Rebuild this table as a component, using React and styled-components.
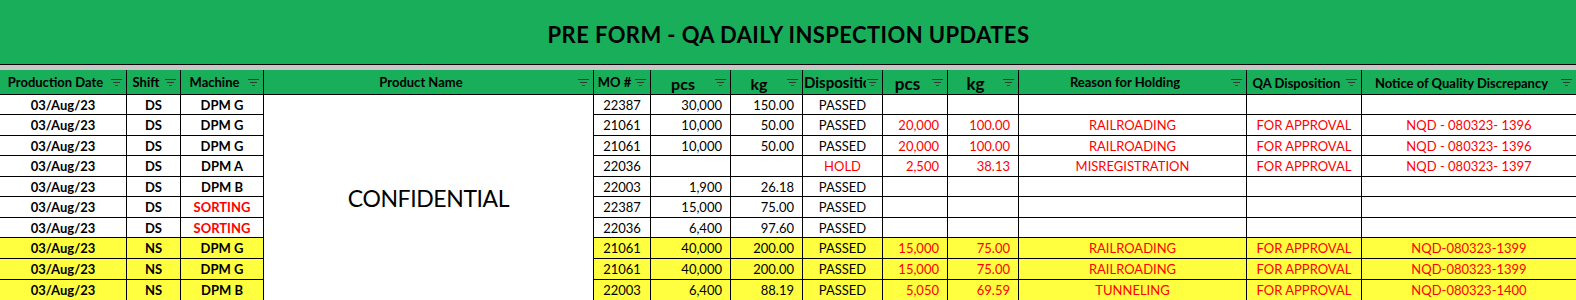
import React from "react";
import styled, { createGlobalStyle } from "styled-components";

const GREEN = "#18ae5a";
const YELLOW = "#ffff40";
const RED = "#ff0000";

const GlobalStyle = createGlobalStyle`
  html, body {
    margin: 0;
    padding: 0;
    background: #ffffff;
    overflow: hidden;
  }
  body {
    font-family: Lato, "Open Sans", "Liberation Sans", sans-serif;
    color: #000;
  }
`;

const Sheet = styled.div`
  width: 1577px;
  height: 300px;
  overflow: hidden;
`;

const TitleBar = styled.div`
  height: 65px;
  box-sizing: border-box;
  background: ${GREEN};
  border-bottom: 1px solid #000;
  display: flex;
  align-items: center;
  justify-content: center;
  padding-top: 4px;
  font-size: 22px;
  font-weight: 700;
  letter-spacing: 0.4px;
`;

const Gap = styled.div`
  height: 5px;
  background: #c8c8c8;
`;

const Grid = styled.div`
  display: grid;
  grid-template-columns: 127px 54px 83px 330px 57px 80px 72px 80px 65px 71px 228px 115px 215px;
  grid-template-rows: 25px 20px 21px 20px 21px 20px 21px 20px 21px 21px 21px;
`;

const HeadCell = styled.div`
  background: ${GREEN};
  border-right: 1px solid #000;
  border-bottom: 1px solid #000;
  box-sizing: border-box;
  display: flex;
  align-items: center;
  padding: 0 4px 0 1px;
  gap: 1px;
  min-width: 0;
`;

const HeadLabel = styled.span`
  flex: 1;
  min-width: 0;
  overflow: hidden;
  white-space: nowrap;
  text-align: center;
  font-weight: 700;
  font-size: ${(p) => p.$size || 13}px;
  line-height: normal;
  padding-top: ${(p) => p.$drop || 0}px;
`;

const Icon = styled.svg`
  flex-shrink: 0;
  width: 11px;
  height: 7px;
`;

const Cell = styled.div`
  background: ${(p) => (p.$fill ? YELLOW : "#fff")};
  border-right: 1px solid #000;
  border-bottom: 1px solid #000;
  box-sizing: border-box;
  display: flex;
  align-items: center;
  justify-content: ${(p) => (p.$right ? "flex-end" : "center")};
  padding: ${(p) => (p.$right ? "0 8px 0 0" : "0")};
  font-size: 13px;
  font-weight: ${(p) => (p.$bold ? 700 : 400)};
  color: ${(p) => (p.$red ? RED : "#000")};
  white-space: nowrap;
`;

const MergedCell = styled.div`
  grid-column: 4;
  grid-row: 2 / span 10;
  background: #fff;
  border-right: 1px solid #000;
  box-sizing: border-box;
  display: flex;
  justify-content: center;
  align-items: flex-start;
  padding-top: 89px;
  font-size: 23px;
  font-weight: 400;
  letter-spacing: -0.4px;
`;

const FilterIcon = () => (
  <Icon viewBox="0 0 11 7">
    <g stroke="#2f3a33" strokeWidth="1">
      <line x1="0" y1="0.5" x2="11" y2="0.5" />
      <line x1="2" y1="3.5" x2="9" y2="3.5" />
      <line x1="4" y1="6.5" x2="7" y2="6.5" />
    </g>
  </Icon>
);

const headers = [
  { label: "Production Date" },
  { label: "Shift" },
  { label: "Machine" },
  { label: "Product Name" },
  { label: "MO #" },
  { label: "pcs", size: 16, drop: 2 },
  { label: "kg", size: 16, drop: 2 },
  { label: "Disposition", size: 15 },
  { label: "pcs", size: 17, drop: 2 },
  { label: "kg", size: 17, drop: 2 },
  { label: "Reason for Holding" },
  { label: "QA Disposition", drop: 2 },
  { label: "Notice of Quality Discrepancy", drop: 2 },
];

const rows = [
  { shift: "DS", machine: "DPM G", mo: "22387", pcs: "30,000", kg: "150.00", disp: "PASSED" },
  { shift: "DS", machine: "DPM G", mo: "21061", pcs: "10,000", kg: "50.00", disp: "PASSED", hpcs: "20,000", hkg: "100.00", reason: "RAILROADING", qa: "FOR APPROVAL", nqd: "NQD - 080323- 1396" },
  { shift: "DS", machine: "DPM G", mo: "21061", pcs: "10,000", kg: "50.00", disp: "PASSED", hpcs: "20,000", hkg: "100.00", reason: "RAILROADING", qa: "FOR APPROVAL", nqd: "NQD - 080323- 1396" },
  { shift: "DS", machine: "DPM A", mo: "22036", pcs: "", kg: "", disp: "HOLD", dispRed: true, hpcs: "2,500", hkg: "38.13", reason: "MISREGISTRATION", qa: "FOR APPROVAL", nqd: "NQD - 080323- 1397" },
  { shift: "DS", machine: "DPM B", mo: "22003", pcs: "1,900", kg: "26.18", disp: "PASSED" },
  { shift: "DS", machine: "SORTING", machineRed: true, mo: "22387", pcs: "15,000", kg: "75.00", disp: "PASSED" },
  { shift: "DS", machine: "SORTING", machineRed: true, mo: "22036", pcs: "6,400", kg: "97.60", disp: "PASSED" },
  { shift: "NS", machine: "DPM G", mo: "21061", pcs: "40,000", kg: "200.00", disp: "PASSED", hpcs: "15,000", hkg: "75.00", reason: "RAILROADING", qa: "FOR APPROVAL", nqd: "NQD-080323-1399", fill: true },
  { shift: "NS", machine: "DPM G", mo: "21061", pcs: "40,000", kg: "200.00", disp: "PASSED", hpcs: "15,000", hkg: "75.00", reason: "RAILROADING", qa: "FOR APPROVAL", nqd: "NQD-080323-1399", fill: true },
  { shift: "NS", machine: "DPM B", mo: "22003", pcs: "6,400", kg: "88.19", disp: "PASSED", hpcs: "5,050", hkg: "69.59", reason: "TUNNELING", qa: "FOR APPROVAL", nqd: "NQD-080323-1400", fill: true },
];

export default function App() {
  return (
    <>
      <GlobalStyle />
      <Sheet>
        <TitleBar>PRE FORM - QA DAILY INSPECTION UPDATES</TitleBar>
        <Gap />
        <Grid>
          {headers.map((h, i) => (
            <HeadCell key={"h" + i}>
              <HeadLabel $size={h.size} $drop={h.drop}>{h.label}</HeadLabel>
              <FilterIcon />
            </HeadCell>
          ))}
          <MergedCell>CONFIDENTIAL</MergedCell>
          {rows.map((r, i) => {
            const f = r.fill;
            return (
              <React.Fragment key={"r" + i}>
                <Cell $fill={f} $bold>03/Aug/23</Cell>
                <Cell $fill={f} $bold>{r.shift}</Cell>
                <Cell $fill={f} $bold $red={r.machineRed}>{r.machine}</Cell>
                <Cell $fill={f}>{r.mo}</Cell>
                <Cell $fill={f} $right>{r.pcs}</Cell>
                <Cell $fill={f} $right>{r.kg}</Cell>
                <Cell $fill={f} $red={r.dispRed}>{r.disp}</Cell>
                <Cell $fill={f} $right $red>{r.hpcs}</Cell>
                <Cell $fill={f} $right $red>{r.hkg}</Cell>
                <Cell $fill={f} $red>{r.reason}</Cell>
                <Cell $fill={f} $red>{r.qa}</Cell>
                <Cell $fill={f} $red>{r.nqd}</Cell>
              </React.Fragment>
            );
          })}
        </Grid>
      </Sheet>
    </>
  );
}
